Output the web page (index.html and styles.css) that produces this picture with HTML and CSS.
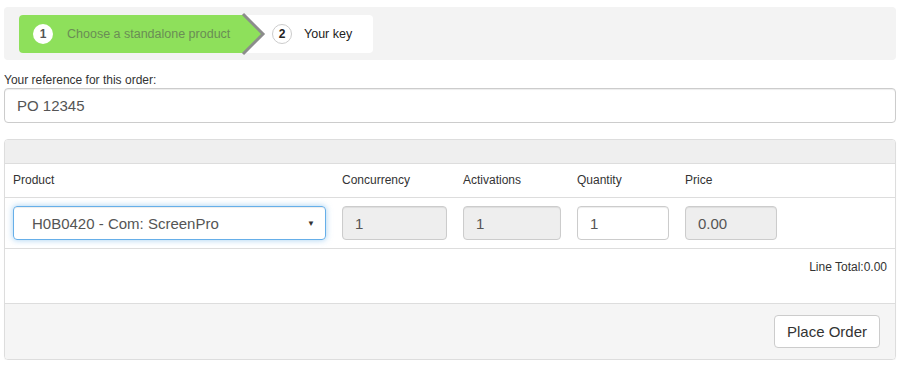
FILE: index.html
```html
<!DOCTYPE html>
<html lang="en">
<head>
  <meta charset="UTF-8">
  <title>Order key</title>
  <link rel="stylesheet" href="styles.css">
</head>
<body>
  <div class="page">
    <div class="wizard">
      <div class="steps">
        <div class="step step-active">
          <span class="badge">1</span>
          <span class="step-label">Choose a standalone product</span>
        </div>
        <svg class="step-arrow" width="24" height="38" viewBox="0 0 24 38">
          <polygon points="0,0 19,19 0,38" fill="#8ee05b"/>
          <polyline points="0,-1 20,19 0,39" fill="none" stroke="#8c8c8c" stroke-width="3"/>
        </svg>
        <div class="step">
          <span class="badge badge-outline">2</span>
          <span class="step-label">Your key</span>
        </div>
      </div>
    </div>

    <label class="ref-label" for="ref">Your reference for this order:</label>
    <input id="ref" class="field" value="PO 12345">

    <div class="panel">
      <div class="panel-heading"></div>
      <table class="lines">
        <thead>
          <tr>
            <th class="col-product">Product</th>
            <th class="col-conc">Concurrency</th>
            <th class="col-act">Activations</th>
            <th class="col-qty">Quantity</th>
            <th class="col-price">Price</th>
            <th></th>
          </tr>
        </thead>
        <tbody>
          <tr>
            <td>
              <div class="select">
                <span>H0B0420 - Com: ScreenPro</span>
                <span class="caret">▼</span>
              </div>
            </td>
            <td><input class="field" value="1" disabled></td>
            <td><input class="field" value="1" disabled></td>
            <td><input class="field" value="1"></td>
            <td><input class="field" value="0.00" disabled></td>
            <td></td>
          </tr>
        </tbody>
      </table>
      <div class="line-total">Line Total:0.00</div>
      <div class="panel-footer">
        <button class="btn">Place Order</button>
      </div>
    </div>
  </div>
</body>
</html>
```

FILE: styles.css
```css
body {
  margin: 0;
  font-family: "Liberation Sans", Arial, sans-serif;
  color: #333;
  background: #fff;
}
.page {
  padding: 7px 4px 0 4px;
}
/* step wizard */
.wizard {
  background: #f3f3f3;
  border-radius: 4px;
  padding: 8px 15px 7px 15px;
}
.steps {
  display: inline-flex;
  align-items: center;
  background: #fff;
  border-radius: 4px;
  height: 38px;
}
.step {
  display: flex;
  align-items: center;
  height: 38px;
  font-size: 12.5px;
}
.step-active {
  background: #8ee05b;
  border-radius: 4px 0 0 4px;
  padding-left: 14px;
  width: 210px;
  color: #6a8d55;
}
.step-arrow {
  display: block;
  overflow: visible;
}
.step-arrow + .step {
  padding: 0 21px 0 5px;
  color: #222;
}
.badge {
  width: 20px;
  height: 20px;
  border-radius: 50%;
  background: #fff;
  color: #555;
  font-size: 12px;
  font-weight: bold;
  display: flex;
  align-items: center;
  justify-content: center;
  margin-right: 14px;
  box-sizing: border-box;
}
.badge-outline {
  border: 1px solid #ccc;
  color: #222;
  margin-right: 12px;
}
/* reference */
.ref-label {
  display: block;
  font-size: 12px;
  line-height: 16px;
  margin-top: 12px;
}
.field {
  display: block;
  width: 100%;
  box-sizing: border-box;
  height: 35px;
  padding: 6px 12px;
  font-family: inherit;
  font-size: 15px;
  color: #555;
  background: #fff;
  border: 1px solid #ccc;
  border-radius: 4px;
  box-shadow: inset 0 1px 1px rgba(0,0,0,0.075);
}
.field:disabled {
  background: #eee;
  color: #555;
}
/* order panel */
.panel {
  margin-top: 16px;
  border: 1px solid #ddd;
  border-radius: 4px;
  box-shadow: 0 1px 1px rgba(0,0,0,0.05);
}
.panel-heading {
  height: 23px;
  background: #efefef;
  border-bottom: 1px solid #ddd;
  border-radius: 3px 3px 0 0;
}
.lines {
  width: 100%;
  border-collapse: collapse;
  table-layout: fixed;
}
.lines th {
  text-align: left;
  font-weight: normal;
  font-size: 12px;
  line-height: 17px;
  padding: 8px;
  color: #333;
  border-bottom: 1px solid #ddd;
}
.lines td {
  padding: 8px;
  border-bottom: 1px solid #ddd;
}
.lines .field {
  height: 34px;
}
.col-product { width: 313px; }
.col-conc { width: 105px; }
.col-act { width: 98px; }
.col-qty { width: 92px; }
.col-price { width: 92px; }
.select {
  display: flex;
  align-items: center;
  justify-content: space-between;
  height: 34px;
  box-sizing: border-box;
  padding: 0 10px 0 18px;
  font-size: 15px;
  color: #555;
  border: 1px solid #66afe9;
  border-radius: 4px;
  box-shadow: inset 0 1px 1px rgba(0,0,0,0.075), 0 0 6px rgba(102,175,233,0.6);
}
.caret {
  font-size: 8px;
  color: #333;
}
.line-total {
  height: 54px;
  box-sizing: border-box;
  padding: 11px 8px 0 8px;
  text-align: right;
  font-size: 12px;
}
.panel-footer {
  display: flex;
  justify-content: flex-end;
  background: #f5f5f5;
  border-top: 1px solid #ddd;
  padding: 11px 15px 11px 15px;
  border-radius: 0 0 3px 3px;
}
.btn {
  height: 33px;
  padding: 6px 12px;
  font-family: inherit;
  font-size: 15px;
  color: #333;
  background: #fff;
  border: 1px solid #ccc;
  border-radius: 4px;
}
```
